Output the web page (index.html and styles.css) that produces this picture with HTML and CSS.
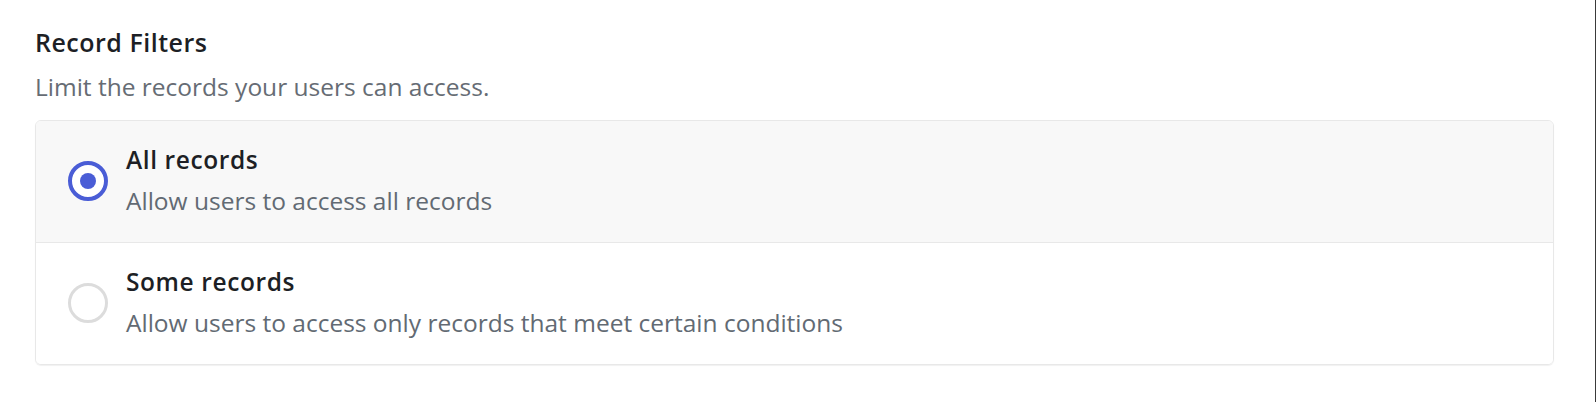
FILE: index.html
```html
<!DOCTYPE html>
<html lang="en">
<head>
<meta charset="utf-8">
<title>Record Filters</title>
<link rel="stylesheet" href="styles.css">
</head>
<body>
<div class="page">
  <section class="filters">
    <h2 class="filters-title">Record Filters</h2>
    <p class="filters-desc">Limit the records your users can access.</p>
    <div class="options" role="radiogroup">
      <label class="option option-selected">
        <span class="radio radio-on"><span class="radio-dot"></span></span>
        <span class="option-text">
          <span class="option-title">All records</span>
          <span class="option-desc">Allow users to access all records</span>
        </span>
      </label>
      <label class="option">
        <span class="radio"></span>
        <span class="option-text">
          <span class="option-title">Some records</span>
          <span class="option-desc">Allow users to access only records that meet certain conditions</span>
        </span>
      </label>
    </div>
  </section>
</div>
</body>
</html>
```
FILE: styles.css
```css
* { box-sizing: border-box; }
html, body { margin: 0; padding: 0; background: #ffffff; }
body {
  font-family: "Open Sans", "Liberation Sans", sans-serif;
  color: #1d1f25;
}
.page {
  width: 1596px;
  height: 402px;
  border-right: 1px solid #3a3a3a;
  padding: 25px 41px 0 35px;
}
.filters-title {
  margin: 0;
  font-size: 25px;
  line-height: 34px;
  font-weight: 600;
  letter-spacing: 0.5px;
  color: #1d1f25;
}
.filters-desc {
  margin: 11px 0 0;
  font-size: 24.5px;
  line-height: 34px;
  color: #666c74;
}
.options {
  margin-top: 16px;
  border: 1px solid #e8e8e8;
  border-radius: 6px;
  box-shadow: 0 1px 1px rgba(0, 0, 0, 0.06);
  overflow: hidden;
}
.option {
  display: flex;
  align-items: center;
  gap: 18px;
  padding: 19px 32px 20px;
  background: #ffffff;
}
.option + .option { border-top: 1px solid #e8e8e8; }
.option-selected { background: #f8f8f8; }
.radio {
  flex: none;
  width: 40px;
  height: 40px;
  border-radius: 50%;
  border: 3px solid #dcdcdc;
  background: #ffffff;
  display: flex;
  align-items: center;
  justify-content: center;
}
.radio-on { border: 4px solid #4a5dd6; }
.radio-dot {
  width: 16px;
  height: 16px;
  border-radius: 50%;
  background: #4a5dd6;
}
.option-text { display: flex; flex-direction: column; }
.option-title {
  font-size: 24.5px;
  line-height: 40px;
  font-weight: 600;
  letter-spacing: 0.6px;
  color: #1d1f25;
}
.option-desc {
  font-size: 24.5px;
  line-height: 42px;
  color: #626a73;
}
```
